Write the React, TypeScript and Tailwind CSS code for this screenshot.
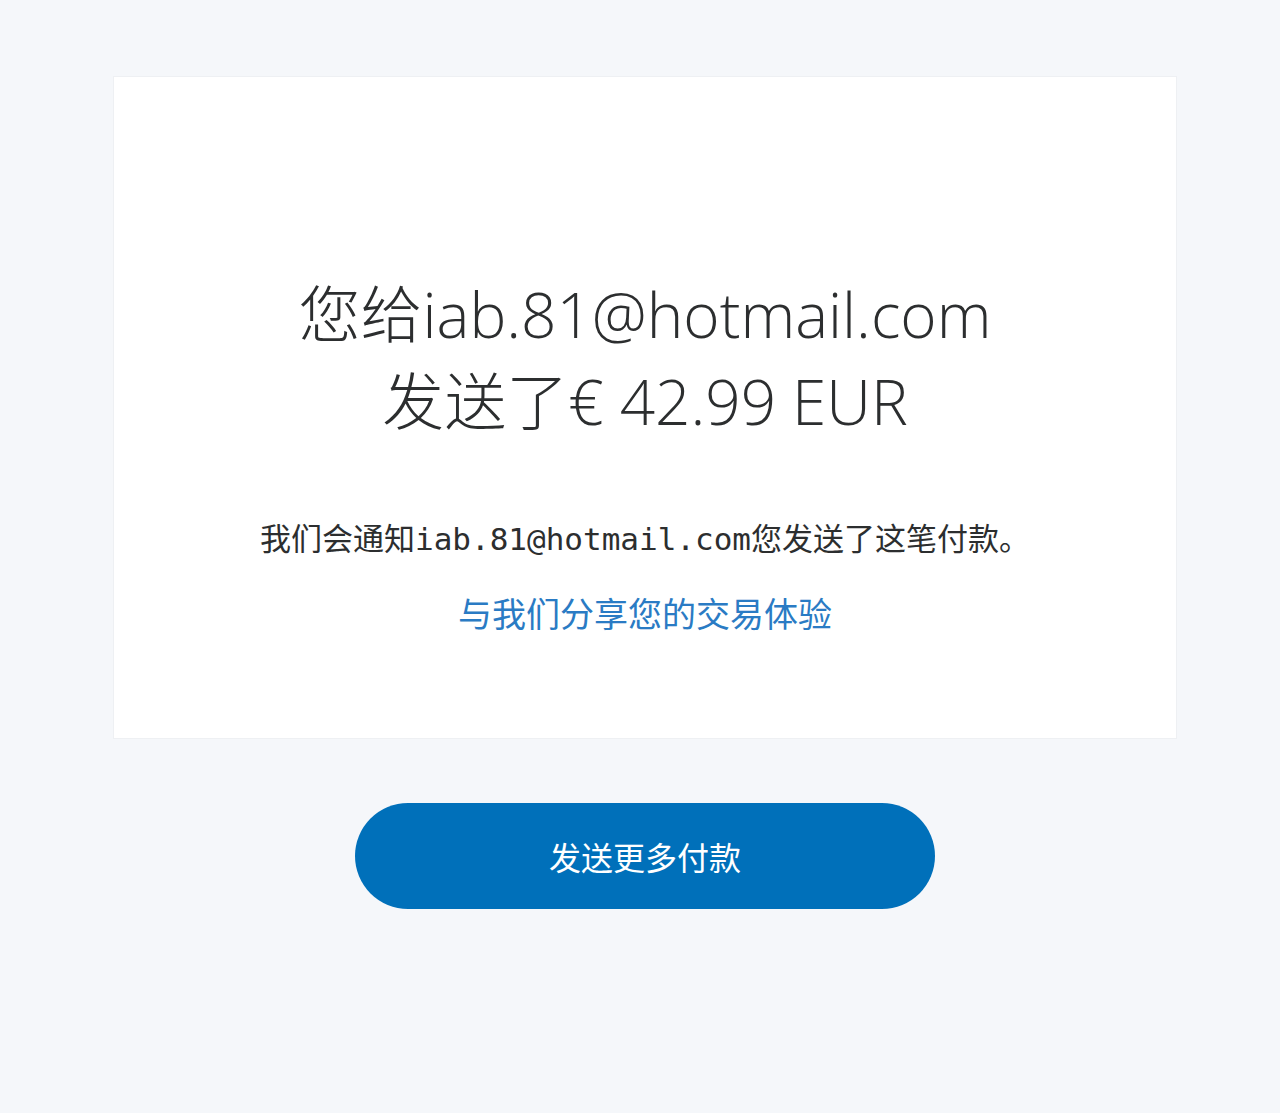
import React from 'react';

const cjk = '"Noto Sans CJK SC", sans-serif';

export default function App() {
  return (
    <div className="min-h-[1113px] w-full bg-[#f5f7fa]">
      <div className="ml-[113px] w-[1064px] pt-[76px]">
        <section className="flex h-[663px] flex-col items-center border border-[#eef0f3] bg-white pt-[194px] text-center text-[#2c2e2f]">
          <h1
            className="text-[62px] font-light leading-[87px]"
            style={{ fontFamily: `"Open Sans", ${cjk}` }}
          >
            您给iab.81@hotmail.com
            <br />
            发送了€ 42.99 EUR
          </h1>

          <p
            className="mt-[74px] text-[31px] leading-[40px]"
            style={{ fontFamily: `"DejaVu Sans Mono", ${cjk}` }}
          >
            我们会通知iab.81@hotmail.com您发送了这笔付款。
          </p>

          <a
            href="#"
            className="mt-[32px] text-[34px] leading-[44px] text-[#2a7bc4]"
            style={{ fontFamily: cjk }}
          >
            与我们分享您的交易体验
          </a>
        </section>

        <div className="mt-[64px] flex justify-center">
          <button
            type="button"
            className="h-[106px] w-[580px] rounded-full bg-[#0070ba] text-[32px] text-white"
            style={{ fontFamily: cjk }}
          >
            发送更多付款
          </button>
        </div>
      </div>
    </div>
  );
}
